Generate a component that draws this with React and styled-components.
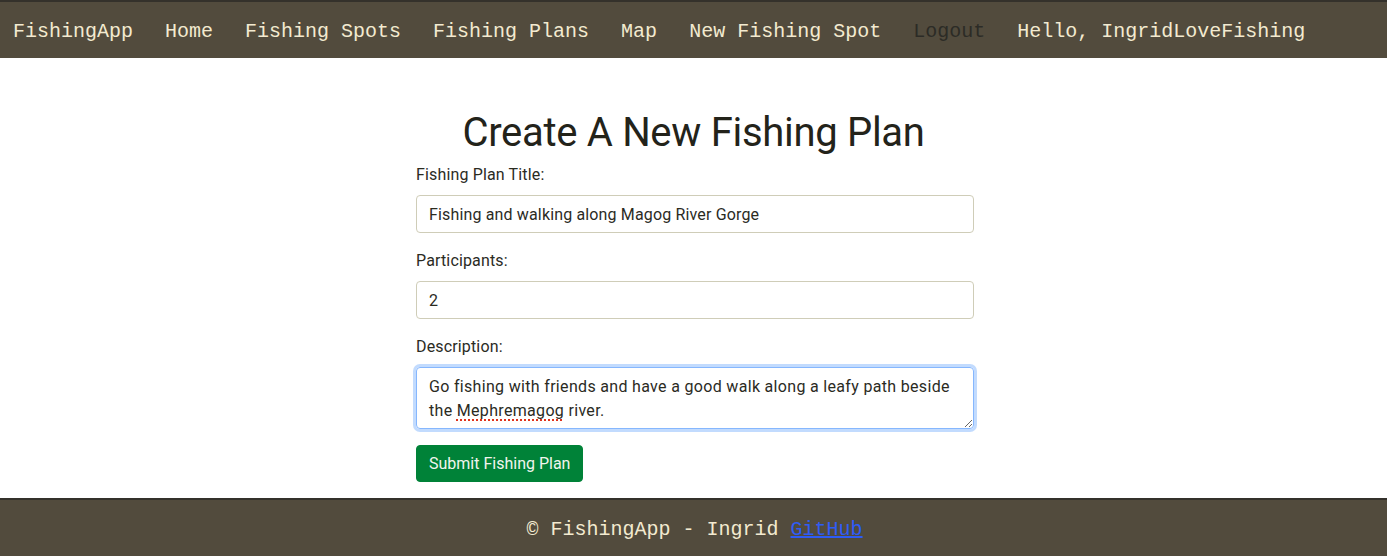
import React from 'react';
import styled, { createGlobalStyle } from 'styled-components';

const GlobalStyle = createGlobalStyle`
	body {
		margin: 0;
		background: #fff;
		font-family: Roboto, "Liberation Sans", sans-serif;
		color: #2b2b1f;
	}
	* { box-sizing: border-box; }
`;

const Page = styled.div`
	display: flex;
	flex-direction: column;
	min-height: 556px;
`;

const Nav = styled.nav`
	height: 58px;
	background: #524b3d;
	border-top: 2px solid #34312b;
	display: flex;
	align-items: center;
	gap: 32px;
	padding: 2px 0 0 13px;
`;

const NavLink = styled.a`
	font-family: "Liberation Mono", "Courier New", monospace;
	font-size: 20px;
	color: ${(props) => (props.muted ? '#2c2b26' : '#f3ead0')};
	text-decoration: none;
	white-space: nowrap;
	cursor: pointer;
`;

const Main = styled.main`
	flex: 1;
	display: flex;
	flex-direction: column;
	align-items: center;
	padding: 51px 0 15px;
`;

const Title = styled.h1`
	margin: 0 0 6px;
	font-size: 40px;
	font-weight: 400;
	line-height: 1.2;
	letter-spacing: -0.3px;
	color: #23231a;
`;

const Form = styled.form`
	width: 558px;
	margin-left: 3px;
	display: flex;
	flex-direction: column;
	letter-spacing: 0.15px;
`;

const Field = styled.div`
	display: flex;
	flex-direction: column;
	margin-bottom: 16px;
`;

const Label = styled.label`
	font-size: 16px;
	line-height: 24px;
	margin-bottom: 8px;
`;

const Input = styled.input`
	height: 38px;
	padding: 6px 12px;
	font: inherit;
	font-size: 16px;
	letter-spacing: 0.15px;
	color: #2b2b1f;
	border: 1px solid #cfcdb8;
	border-radius: 4px;
	outline: none;
`;

const TextArea = styled.div`
	height: 62px;
	padding: 7px 12px 5px;
	font-size: 16px;
	line-height: 24px;
	letter-spacing: 0.32px;
	color: #2b2b1f;
	border: 1px solid #86b7fe;
	border-radius: 4px;
	box-shadow: 0 0 0 3px rgba(13, 110, 253, 0.25);
	outline: none;
	overflow: auto;
	resize: vertical;
`;

const Misspelled = styled.span`
	text-decoration: underline dotted #e0321c;
	text-decoration-thickness: 2px;
	text-underline-offset: 3px;
`;

const SubmitButton = styled.button`
	align-self: flex-start;
	height: 37px;
	padding: 6px 12px;
	font: inherit;
	font-size: 16px;
	letter-spacing: 0;
	color: #f1f5ee;
	background: #008238;
	border: 1px solid #008238;
	border-radius: 4px;
	cursor: pointer;
`;

const Footer = styled.footer`
	height: 58px;
	background: #524b3d;
	border-top: 2px solid #34312b;
	display: flex;
	align-items: center;
	justify-content: center;
	padding: 2px 0 0 2px;
	font-family: "Liberation Mono", "Courier New", monospace;
	font-size: 20px;
	color: #f3ead0;
	white-space: pre;
`;

const FooterLink = styled.a`
	color: #2e5cf6;
	text-decoration: underline;
`;

const links = ['FishingApp', 'Home', 'Fishing Spots', 'Fishing Plans', 'Map', 'New Fishing Spot'];

export default function App() {
	return (
		<Page>
			<GlobalStyle />
			<Nav>
				{links.map((l) => (
					<NavLink key={l}>{l}</NavLink>
				))}
				<NavLink muted>Logout</NavLink>
				<NavLink>Hello, IngridLoveFishing</NavLink>
			</Nav>
			<Main>
				<Title>Create A New Fishing Plan</Title>
				<Form onSubmit={(e) => e.preventDefault()}>
					<Field>
						<Label>Fishing Plan Title:</Label>
						<Input defaultValue='Fishing and walking along Magog River Gorge' />
					</Field>
					<Field>
						<Label>Participants:</Label>
						<Input defaultValue='2' />
					</Field>
					<Field>
						<Label>Description:</Label>
						<TextArea role='textbox' contentEditable suppressContentEditableWarning>
							Go fishing with friends and have a good walk along a leafy path beside the <Misspelled>Mephremagog</Misspelled> river.
						</TextArea>
					</Field>
					<SubmitButton type='submit'>Submit Fishing Plan</SubmitButton>
				</Form>
			</Main>
			<Footer>
				© FishingApp - Ingrid <FooterLink href='#'>GitHub</FooterLink>
			</Footer>
		</Page>
	);
}
